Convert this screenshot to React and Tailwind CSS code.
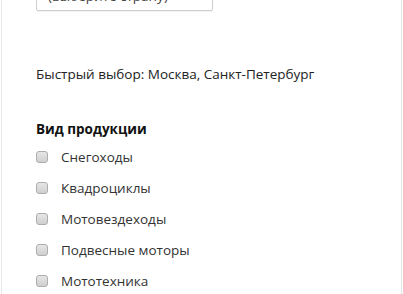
import React from 'react';

const items = ['Снегоходы', 'Квадроциклы', 'Мотовездеходы', 'Подвесные моторы', 'Мототехника'];

function Box() {
  return (
    <span className="block w-[12px] h-[12px] rounded-[3px] border border-[#adadad] bg-gradient-to-b from-[#e6e6e6] to-[#cfcfcf] shrink-0" />
  );
}

export default function App() {
  return (
    <div
      className="ml-[1px] w-[401px] h-[294px] overflow-hidden border-x border-[#e6e6e6] bg-white text-[13.5px] text-[#222]"
      style={{ fontFamily: '"Open Sans", "Noto Sans", sans-serif' }}
    >
      <div className="pl-[34px]">
        <div className="mt-[-19px] w-[177px] h-[30px] border border-[#cfcfcf] rounded-[2px] flex items-center pl-[11px] text-[#444] shadow-[0_1px_1px_rgba(0,0,0,0.06)]">
          (выберите страну)
        </div>
        <div className="mt-[54px] leading-[18px]">Быстрый выбор: Москва, Санкт-Петербург</div>
        <div className="mt-[37px] font-bold leading-[18px] text-[#111]">Вид продукции</div>
        <div className="mt-[10px] flex flex-col gap-[13px]">
          {items.map((t) => (
            <label key={t} className="flex items-center h-[18px]">
              <Box />
              <span className="ml-[13px] text-[#333]">{t}</span>
            </label>
          ))}
        </div>
      </div>
    </div>
  );
}
